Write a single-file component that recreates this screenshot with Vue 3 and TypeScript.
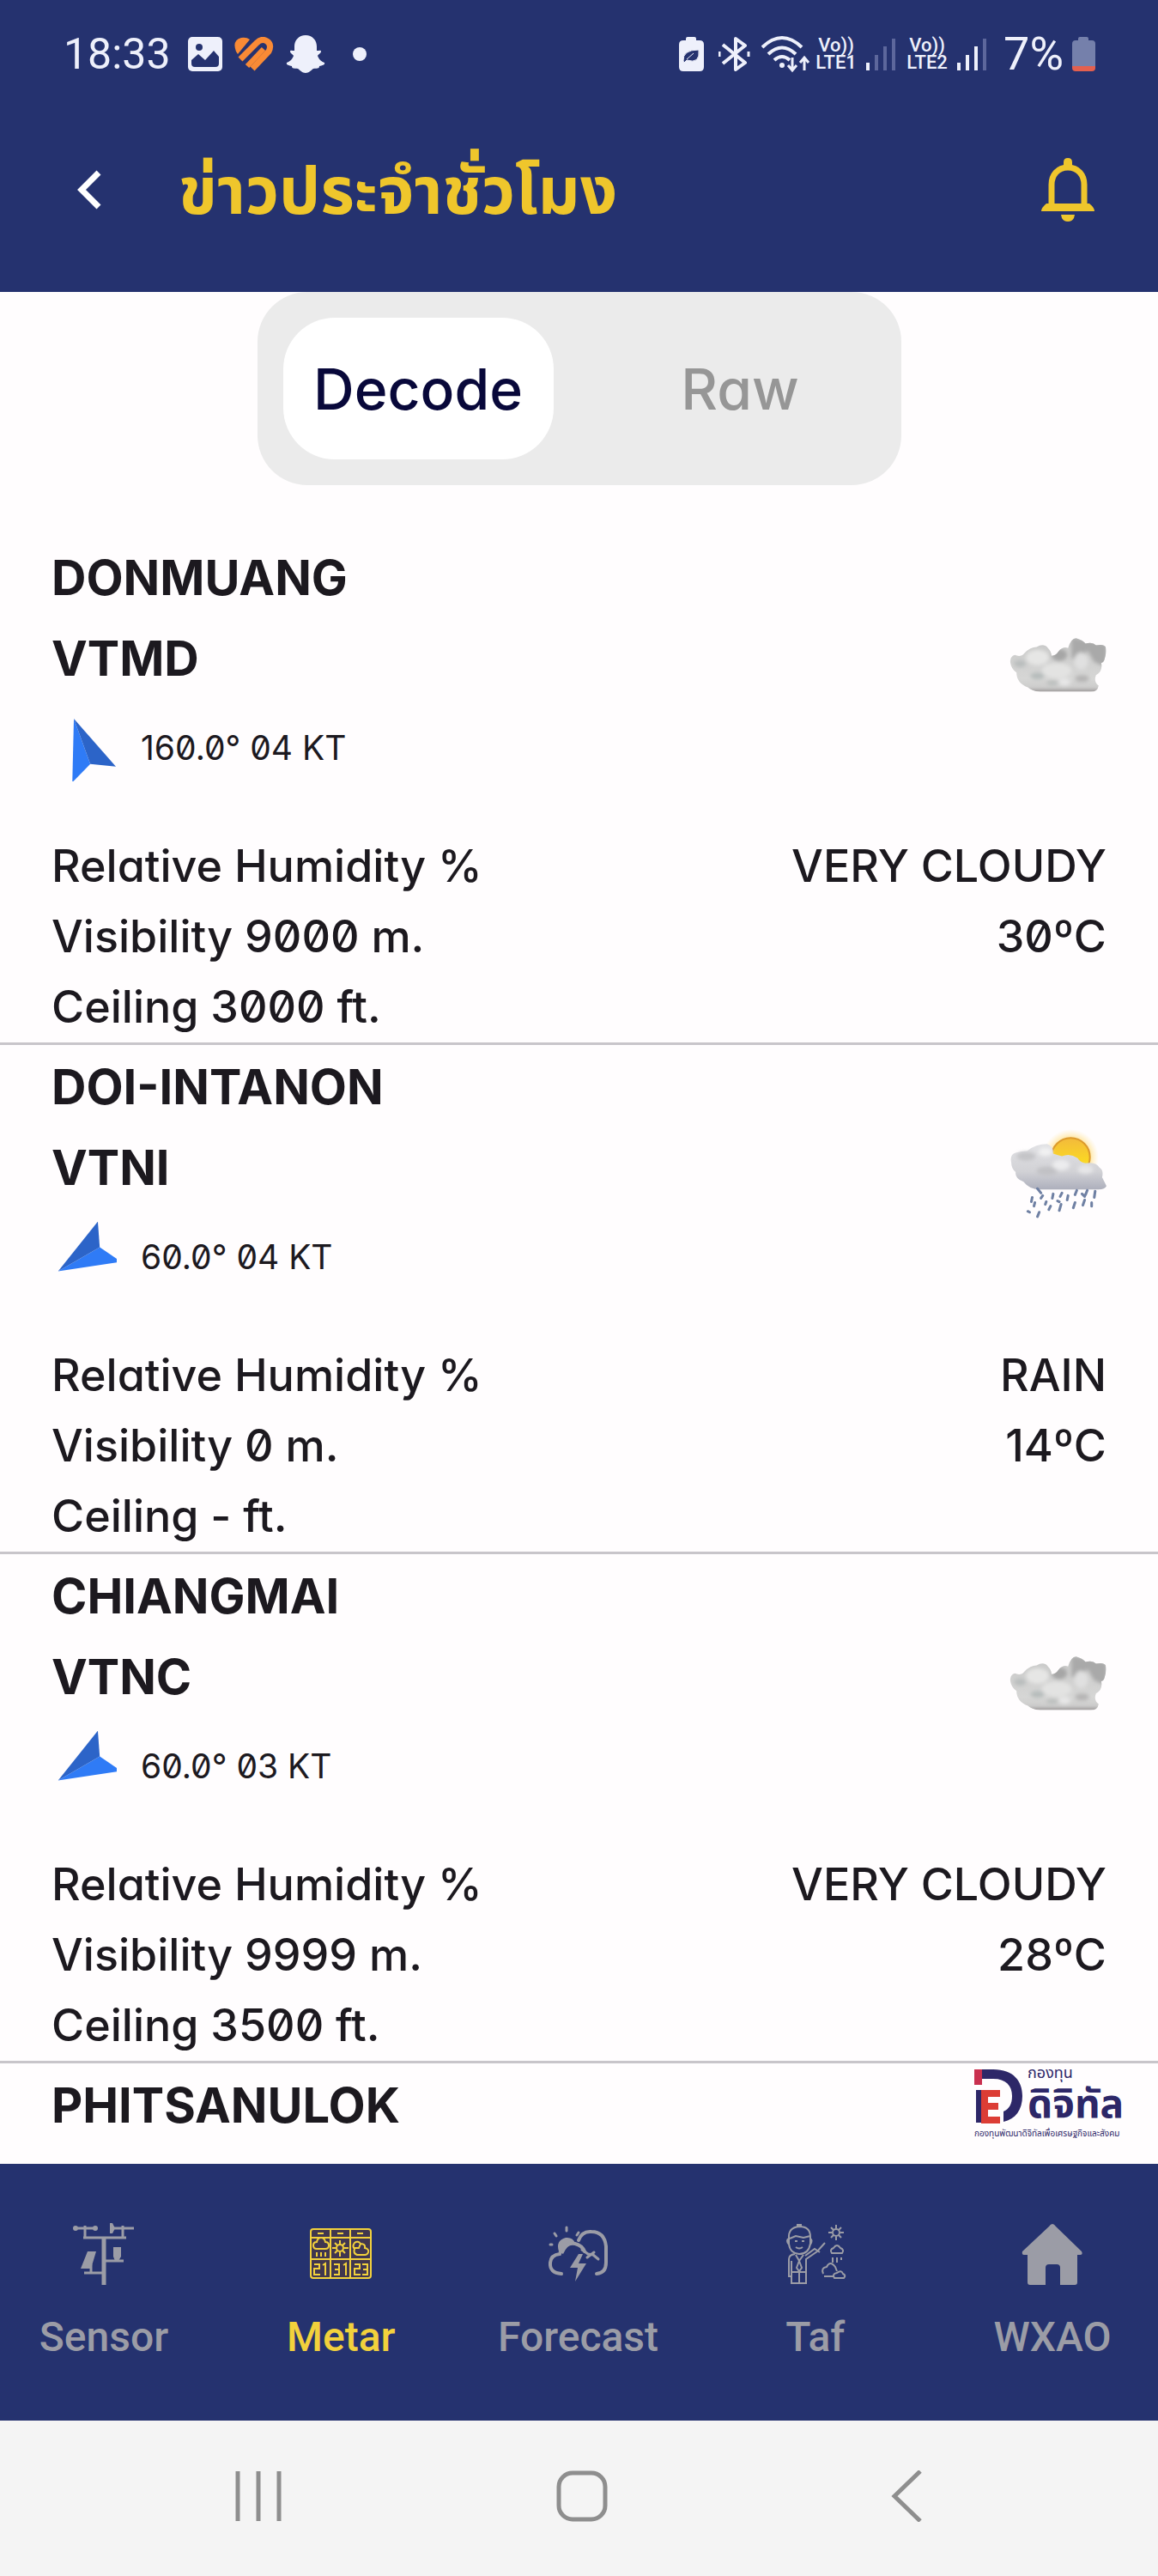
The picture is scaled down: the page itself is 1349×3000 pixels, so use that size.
<script setup lang="ts">
import { ref } from 'vue'

interface Station {
  name: string
  code: string
  wind: number
  speed: string
  visibility: string
  ceiling: string
  sky: 'cloudy' | 'rain'
  condition: string
  temp: string
}

const stations: Station[] = [
  { name: 'DONMUANG', code: 'VTMD', wind: 160, speed: '04', visibility: '9000', ceiling: '3000', sky: 'cloudy', condition: 'VERY CLOUDY', temp: '30' },
  { name: 'DOI-INTANON', code: 'VTNI', wind: 60, speed: '04', visibility: '0', ceiling: '-', sky: 'rain', condition: 'RAIN', temp: '14' },
  { name: 'CHIANGMAI', code: 'VTNC', wind: 60, speed: '03', visibility: '9999', ceiling: '3500', sky: 'cloudy', condition: 'VERY CLOUDY', temp: '28' },
]

const tabs = ['Decode', 'Raw']
const activeTab = ref('Decode')
const navItems = ['Sensor', 'Metar', 'Forecast', 'Taf', 'WXAO']
const activeNav = ref('Metar')
</script>

<template>
  <div class="screen">
    <header class="top">
      <div class="status">
        <div class="status-left">
          <span class="clock">18:33</span>
          <svg width="40" height="40" viewBox="0 0 40 40">
            <rect width="40" height="40" rx="5" fill="#eef0fb" />
            <circle cx="13" cy="12" r="4" fill="#25326f" />
            <path d="M4 31v-4l8-7 8 7 10-11 6 7v8q0 4-4 4H8q-4 0-4-4z" fill="#25326f" />
          </svg>
          <svg width="46" height="40" viewBox="0 0 46 40" fill="none" stroke="#f98a35" stroke-width="7">
            <path d="M2 17Q-3 4 8 1q6-1 10 2L4 20z" fill="#f98a35" stroke="none" />
            <path d="M7 26 26 7q6-6 12-2t2 12L21 37" />
            <path d="M15 34 34 14" stroke-width="6" />
          </svg>
          <svg width="46" height="44" viewBox="0 0 46 44" fill="#eef0fb">
            <path d="M23 0c8 0 13 6 13 13v5c3 0 5-1 5 1s-3 3-4 5c2 5 5 7 8 8 1 3-3 3-6 4 0 4-4 2-7 3-3 2-5 5-9 5s-6-3-9-5c-3-1-7 1-7-3-3-1-7-1-6-4 3-1 6-3 8-8-1-2-4-3-4-5s2-1 5-1v-5C10 6 15 0 23 0z" />
          </svg>
          <svg width="52" height="18" viewBox="0 0 52 18"><circle cx="26" cy="9" r="8" fill="#eef0fb" /></svg>
        </div>
        <div class="status-right">
          <svg width="36" height="40" viewBox="0 0 36 40">
            <path d="M8 4V2q0-2 2-2h8q2 0 2 2v2h4q5 0 5 5v26q0 5-5 5H5q-5 0-5-5V9q0-5 5-5z" fill="#eef0fb" />
            <path d="M5 28q-1-13 18-13 2 17-14 12l-3 3zM9 26l8-7" fill="#25326f" stroke="#eef0fb" stroke-width="1" />
          </svg>
          <svg width="40" height="40" viewBox="0 0 40 40" fill="none" stroke="#eef0fb" stroke-width="4" stroke-linejoin="round">
            <path d="M5 9 31 30 20 38V2l11 8L5 31" />
            <path d="M1 17v6M35 17v6" stroke-width="3" />
          </svg>
          <div class="radio">
            <svg width="58" height="44" viewBox="0 0 58 44" fill="none" stroke="#eef0fb" stroke-width="4">
              <path d="M1 14q23-22 46 0M8 22q16-15 32 0M15 29q9-8 18 0" />
              <circle cx="24" cy="35" r="3" fill="#eef0fb" stroke="none" />
              <path d="M36 26v15M31 35l5 6 5-6M50 41V26M45 32l5-6 5 6" stroke-width="3" />
            </svg>
            <span class="volte"><span>Vo))</span><span>LTE1</span></span>
          </div>
          <svg width="36" height="40" viewBox="0 0 36 40">
            <path d="M0 30h4v9H0z" fill="#eef0fb" />
            <path d="M10 21h4v18h-4zM20 11h4v28h-4zM30 2h4v37h-4z" fill="#5d679c" />
          </svg>
          <span class="volte"><span>Vo))</span><span>LTE2</span></span>
          <svg width="44" height="40" viewBox="0 0 44 40">
            <path d="M0 30h4v9H0zM10 21h4v18h-4zM20 11h4v28h-4z" fill="#eef0fb" />
            <path d="M30 2h4v37h-4z" fill="#5d679c" />
          </svg>
          <span class="clock">7%</span>
          <svg width="27" height="40" viewBox="0 0 27 40">
            <path d="M7 4V2q0-2 2-2h8q2 0 2 2v2h4q4 0 4 4v26H0V8q0-4 4-4z" fill="#7580ab" />
            <path d="M0 34h27v2q0 4-4 4H4q-4 0-4-4z" fill="#e4604f" />
          </svg>
        </div>
      </div>
      <div class="bar">
        <button class="icon-btn" aria-label="Back">
          <svg width="30" height="46" viewBox="0 0 30 46" fill="none" stroke="#fff" stroke-width="7">
            <path d="M25 3 5 23l20 20" />
          </svg>
        </button>
        <h1>ข่าวประจำชั่วโมง</h1>
        <button class="icon-btn" aria-label="Notifications">
          <svg width="62" height="76" viewBox="0 0 62 76">
            <path d="M31 12c-12 0-19 9-19 20v27h38V32c0-11-7-20-19-20z" fill="none" stroke="#efc62c" stroke-width="7" />
            <path d="M26 11V6q0-5 5-5t5 5v5zM0 63q0-4 6-9h50q6 5 6 9zM23 67h16q-1 8-8 8t-8-8z" fill="#efc62c" />
          </svg>
        </button>
      </div>
    </header>

    <main class="content">
      <div class="toggle" role="group" aria-label="Report format">
        <button v-for="t in tabs" :key="t" :class="{ on: t === activeTab }" @click="activeTab = t">{{ t }}</button>
      </div>

      <article v-for="s in stations" :key="s.code" class="station">
        <div class="head">
          <div>
            <h2>{{ s.name }}</h2>
            <h2>{{ s.code }}</h2>
            <div class="wind">
              <svg width="76" height="80" viewBox="-38 -40 76 80">
                <g :transform="`rotate(${s.wind + 180})`">
                  <path d="M0-35-27 34 0 21z" fill="#2f7bf6" />
                  <path d="M0-35 27 34 0 21z" fill="#2c64c8" />
                </g>
              </svg>
              <span>{{ s.wind }}.0° {{ s.speed }} KT</span>
            </div>
          </div>
          <svg v-if="s.sky === 'cloudy'" class="sky" viewBox="0 -3 112 112">
            <defs>
              <linearGradient id="haze" x1="0" y1="0" x2="0" y2="1">
                <stop offset="0" stop-color="#c2c2c2" />
                <stop offset=".6" stop-color="#d6d6d5" />
                <stop offset="1" stop-color="#b0afaf" />
              </linearGradient>
              <filter id="soft"><feGaussianBlur stdDeviation="2" /></filter>
              <clipPath id="cloudShape">
                <path d="M2 49q-1-7 5-9 7 3 11-2 7-7 14-7 8-5 13 1 4 4 4 9 5 0 8-5 5-6 11-4 4-12 10-11 7 2 10 6 8-2 12 2 9-2 11 2 1 7-1 13-1 5-4 5 2 10-6 14-3 8 3 12-1 7-9 7H36q-10-1-14-5-13-5-13-17-6-4-7-11z" />
              </clipPath>
            </defs>
            <g clip-path="url(#cloudShape)">
              <rect width="112" height="112" fill="url(#haze)" />
              <g filter="url(#soft)">
                <path d="M72 20l40 8v26l-14-6-8-14-6 14-12-4z" fill="#a9a9a9" />
                <ellipse cx="58" cy="40" rx="9" ry="7" fill="#a6a6a6" />
                <ellipse cx="33" cy="43" rx="13" ry="9" fill="#e6e6e5" />
                <ellipse cx="83" cy="47" rx="8" ry="10" fill="#e0e0e0" />
                <ellipse cx="55" cy="58" rx="17" ry="9" fill="#e3e3e2" />
                <ellipse cx="13" cy="50" rx="7" ry="4" fill="#b9bdbd" />
                <ellipse cx="33" cy="64" rx="8" ry="4" fill="#b6bcbb" />
                <ellipse cx="50" cy="72" rx="7" ry="3" fill="#bcbfbe" />
                <ellipse cx="84" cy="67" rx="8" ry="4" fill="#b5b4b4" />
                <ellipse cx="64" cy="71" rx="7" ry="4" fill="#e8e8e8" />
                <path d="M22 80h82v6H22z" fill="#989494" />
              </g>
            </g>
          </svg>
          <svg v-else class="sky" viewBox="0 -3 112 112">
            <defs>
              <radialGradient id="glow">
                <stop offset=".65" stop-color="#ffd34f" stop-opacity=".6" />
                <stop offset="1" stop-color="#ffe08a" stop-opacity="0" />
              </radialGradient>
              <linearGradient id="disc" x1="0" y1="0" x2="0" y2="1">
                <stop offset="0" stop-color="#f3ba3c" />
                <stop offset="1" stop-color="#ffea14" />
              </linearGradient>
              <linearGradient id="fluff" x1="0" y1="0" x2="0" y2="1">
                <stop offset="0" stop-color="#e2e2e5" />
                <stop offset=".6" stop-color="#d2d2d6" />
                <stop offset="1" stop-color="#adafbc" />
              </linearGradient>
              <filter id="softer"><feGaussianBlur stdDeviation="2" /></filter>
            </defs>
            <circle cx="71" cy="32" r="32" fill="url(#glow)" />
            <circle cx="71" cy="32" r="22" fill="url(#disc)" stroke="#dc9a2d" stroke-width="2" />
            <path d="M3 38q-2-9 5-11 7-2 13-2 10-8 23-8 7 2 7 11 6 2 10 3 9-4 18 2 3 5 9 6 12-2 16 5 5 3 3 11l5 10q-2 4-9 4H36q-12 0-19-9-10-3-9-11-5-4-5-11z" fill="url(#fluff)" />
            <g filter="url(#softer)">
              <ellipse cx="20" cy="31" rx="11" ry="5" fill="#c4c4c7" />
              <ellipse cx="44" cy="48" rx="12" ry="5" fill="#c1c1c5" />
              <ellipse cx="42" cy="26" rx="8" ry="5" fill="#f1f1f2" />
              <ellipse cx="60" cy="41" rx="10" ry="6" fill="#ececee" />
              <ellipse cx="88" cy="46" rx="9" ry="5" fill="#e6e6e8" />
            </g>
            <path d="M33 68l4 5M27 78l-1 5M39 76l-2 3M51 74l-1 5M61 73l-2 4M68 76l-1 5M78 70l-2 5M84 74l3 3M90 70l-2 5M99 71l-1 7M30 84l-1 4M43 83l-1 3M48 88l-2 4M60 86l-2 7M76 84l-2 6M87 81l-2 6M95 84v4M22 94l2 1M35 95l-2 5M56 82l2 1" stroke="#6f80a3" stroke-width="3" stroke-linecap="round" fill="none" />
          </svg>
        </div>
        <div class="facts">
          <div>
            <p>Relative Humidity %</p>
            <p>Visibility {{ s.visibility }} m.</p>
            <p>Ceiling {{ s.ceiling }} ft.</p>
          </div>
          <div class="right">
            <p>{{ s.condition }}</p>
            <p>{{ s.temp }}ºC</p>
          </div>
        </div>
      </article>
      <article class="station last">
        <div class="head"><h2>PHITSANULOK</h2></div>
      </article>

      <div class="fund">
        <svg class="mark" width="58" height="64" viewBox="0 0 58 64">
          <path d="M8 0h14c24 0 34 14 34 31 0 16-8 27-22 30V49c7-3 10-9 10-18 0-12-7-20-22-20H8z" fill="#2d2768" />
          <path d="M0 0h9v18H0z" fill="#c9304f" />
          <path d="M2 24h7v38H2z" fill="#2d2768" />
          <path d="M8 24h22v8H16v7h12v8H16v8h14v8H8z" fill="#dc3d35" />
        </svg>
        <div class="words">
          <span class="small">กองทุน</span>
          <span class="big">ดิจิทัล</span>
        </div>
        <span class="tiny">กองทุนพัฒนาดิจิทัลเพื่อเศรษฐกิจและสังคม</span>
      </div>
    </main>

    <nav class="nav">
      <a v-for="n in navItems" :key="n" href="#" :class="{ on: n === activeNav }" @click.prevent="activeNav = n">
        <svg v-if="n === 'Sensor'" viewBox="0 0 72 72" fill="none" stroke="currentColor" stroke-width="3">
          <path d="M1 6h25M14 3v14M12 17h50M58 3v14M44 6h27" />
          <path d="M36 17v55" stroke-width="5" />
          <path d="M38 44h21M13 58h22M21 48v10" />
          <circle cx="3" cy="6" r="3" fill="currentColor" stroke="none" />
          <circle cx="26" cy="6" r="3" fill="currentColor" stroke="none" />
          <path d="M43 0h3l3 6-3 6h-3zM47 28h9v11l-3 5h-4l-2-5zM17 33h10l-6 20H9z" fill="currentColor" stroke="none" />
        </svg>
        <svg v-else-if="n === 'Metar'" viewBox="0 0 72 72" fill="none" stroke="currentColor" stroke-width="2">
          <rect x="1" y="7" width="70" height="57" rx="3" fill="#40364f" />
          <path d="M1 17h70M1 42h70M24 7v57M47 7v57M9 12h7M32 12h7M55 12h7M8 30q-4 0-4-4t4-4q1-5 5-5t5 5q4 0 4 4t-4 4zM8 34v5M13 34v5M18 34v5" />
          <circle cx="35" cy="29" r="4" />
          <path d="M35 20v4M35 34v5M26 29h4M40 29h5M29 23l3 3M38 32l3 3M41 23l-3 3M32 32l-3 3M55 37q-5-2-3-7-3-3 0-7 4-3 7 1 6 0 5 5 5 1 4 5-1 3-4 3zM52 29h5l2-5" />
          <path d="M5 48h6v5H5v7h7M15 49l3-2v14M28 48h6v12h-6M29 54h5M39 49l3-2v14M52 48h6v5h-6v7h7M61 48h6v12h-6M62 54h5" />
        </svg>
        <svg v-else-if="n === 'Forecast'" viewBox="0 0 72 72" fill="none" stroke="currentColor" stroke-width="4" stroke-linecap="round">
          <path d="M13 33q-4-13 8-16 8-1 11 6-10 3-14 13z" fill="currentColor" stroke="none" />
          <path d="M3 25h2M8 12l2 3M22 5v4M36 11l-2 3" stroke-width="3" />
          <path d="M16 59Q2 58 3 46q1-9 11-10 4-14 18-12 8 2 11 9M36 20q4-11 15-10 15 0 17 17v19q0 12-11 13" />
          <path d="M40 31l7 5 6 1 6 5M46 40l8-6" stroke-width="3" />
          <path d="M36 36 26 52h9l-3 16 13-21h-9l5-11z" fill="currentColor" stroke="none" />
        </svg>
        <svg v-else-if="n === 'Taf'" viewBox="0 0 72 72" fill="none" stroke="currentColor" stroke-width="2">
          <path d="M5 18Q4 5 17 4q13 0 13 12v8q-2 12-13 12Q6 35 5 24zM6 18l7-3 9 2 8-2M12 21h3M20 21h3M13 28q4 3 8 0M15 4V2h4v2M5 18q-4 2 0 7M30 18q3 2 0 7" />
          <path d="M12 36q-7 1-7 6v20h3M8 44v26h17V42l13-9 9-10M24 38l11-8 6 4M8 57h17M17 57v13M13 37l4 7 5-7M17 44l-3 8 3 4 3-4z" />
          <circle cx="60" cy="11" r="4" />
          <path d="M60 2v4M60 16v4M51 11h4M65 11h4M54 5l3 3M63 14l3 3M66 5l-3 3M57 14l-3 3M55 35q-3-4 2-6 4-6 8 0 5 2 2 6zM56 40v6M61 40v6M66 40v3M45 59q-3-7 4-8 4-8 10 0l2 5M58 62H46M58 64q-3-5 3-6 5-4 7 1 4 2 1 5z" />
        </svg>
        <svg v-else viewBox="0 0 72 72" fill="currentColor">
          <path d="M36 1q2 0 4 3l30 29q2 4-2 4h-3v32q0 3-3 3H45V52q0-4-4-4H32q-4 0-4 4v20H10q-3 0-3-3V37H3q-3 0-2-4L32 4q2-3 4-3z" />
        </svg>
        <span>{{ n }}</span>
      </a>
    </nav>

    <div class="system">
      <button aria-label="Recents">
        <svg width="60" height="60" viewBox="0 0 60 60" fill="none" stroke="#8e8e8e" stroke-width="5"><path d="M6 1v58M30 1v58M54 1v58" /></svg>
      </button>
      <button aria-label="Home">
        <svg width="60" height="60" viewBox="0 0 60 60" fill="none" stroke="#8e8e8e" stroke-width="5"><rect x="3" y="3" width="54" height="54" rx="16" /></svg>
      </button>
      <button aria-label="Back">
        <svg width="60" height="60" viewBox="0 0 60 60" fill="none" stroke="#8e8e8e" stroke-width="5"><path d="M46 1 16 30l30 29" /></svg>
      </button>
    </div>
  </div>
</template>

<style>
body {
  background: #f4f4f4;
}
</style>

<style scoped>
.screen {
  display: flex;
  flex-direction: column;
  height: 100vh;
  background: #fffdfe;
  color: #1c191f;
  font-family: Inter, 'Noto Sans Thai', sans-serif;
  font-feature-settings: 'zero', 'cv11';
}
h1, h2, p {
  margin: 0;
}
button {
  border: 0;
  padding: 0;
  background: none;
  font: inherit;
  color: inherit;
}
svg {
  display: block;
  flex: none;
}
.top {
  flex: none;
  background: #25326f;
}
.status {
  display: flex;
  justify-content: space-between;
  align-items: center;
  height: 126px;
  padding: 0 73px 0 74px;
  color: #eef0fb;
  font-family: Roboto, sans-serif;
}
.status-left {
  display: flex;
  align-items: center;
  gap: 14px;
}
.status-right {
  display: flex;
  align-items: center;
  gap: 10px;
}
.clock {
  font-size: 50px;
  line-height: 60px;
}
.status-left .clock {
  margin-right: 6px;
}
.status-right .clock {
  font-size: 54px;
}
.radio {
  display: flex;
  align-items: center;
  gap: 4px;
}
.volte {
  display: flex;
  flex-direction: column;
  align-items: center;
  width: 50px;
  font-size: 22px;
  font-weight: 500;
  line-height: 20px;
}
.bar {
  display: flex;
  align-items: center;
  height: 214px;
  padding: 0 74px 24px 90px;
  box-sizing: border-box;
}
.bar h1 {
  flex: 1;
  margin-left: 88px;
  color: #efc62c;
  font-size: 76px;
  font-weight: 700;
  line-height: 90px;
}
.content {
  position: relative;
  flex: 1;
  min-height: 0;
  overflow: hidden;
}
.toggle {
  display: flex;
  justify-content: space-between;
  width: 750px;
  box-sizing: border-box;
  margin: 0 auto 59px;
  padding: 30px;
  border-radius: 58px;
  background: #ebebeb;
}
.toggle button {
  width: 315px;
  height: 165px;
  border-radius: 60px;
  font-size: 66px;
  font-weight: 500;
  color: #969696;
}
.toggle .on {
  background: #fff;
  color: #08083a;
}
.station {
  padding: 2px 60px 0;
  border-bottom: 3px solid #c8c5ca;
}
.station.last {
  border-bottom: 0;
}
.head {
  display: flex;
  justify-content: space-between;
  align-items: center;
}
h2 {
  font-size: 56px;
  font-weight: 700;
  line-height: 94px;
}
.wind {
  display: flex;
  align-items: center;
  gap: 28px;
  height: 112px;
  font-size: 39px;
}
.sky {
  width: 114px;
  height: 114px;
}
.facts {
  display: flex;
  justify-content: space-between;
  margin-top: 42px;
  font-size: 52px;
  font-weight: 500;
  line-height: 82px;
}
.right {
  text-align: right;
}
.fund {
  position: absolute;
  right: 33px;
  bottom: 26px;
  display: grid;
  grid-template-columns: 58px auto;
  column-gap: 4px;
  align-items: end;
  width: 181px;
  color: #2d2768;
}
.words {
  display: flex;
  flex-direction: column;
}
.small {
  font-size: 18px;
  line-height: 20px;
}
.big {
  font-size: 46px;
  font-weight: 700;
  line-height: 50px;
}
.tiny {
  grid-column: 1 / 3;
  font-size: 10px;
  line-height: 20px;
  white-space: nowrap;
}
.nav {
  flex: none;
  display: flex;
  justify-content: space-between;
  height: 299px;
  padding: 69px 48px 0 46px;
  box-sizing: border-box;
  background: #25326f;
  font-family: Roboto, sans-serif;
}
.nav a {
  display: flex;
  flex-direction: column;
  align-items: center;
  gap: 31px;
  width: 150px;
  color: #9b9ca6;
  font-size: 48px;
  font-weight: 500;
  line-height: 60px;
  text-decoration: none;
}
.nav .on {
  color: #f2d13c;
}
.nav svg {
  width: 72px;
  height: 72px;
}
.system {
  flex: none;
  display: grid;
  grid-template-columns: repeat(3, 1fr);
  height: 181px;
  padding: 0 104px 6px 112px;
  box-sizing: border-box;
  place-items: center;
  align-content: center;
  background: #f4f4f4;
}
</style>
